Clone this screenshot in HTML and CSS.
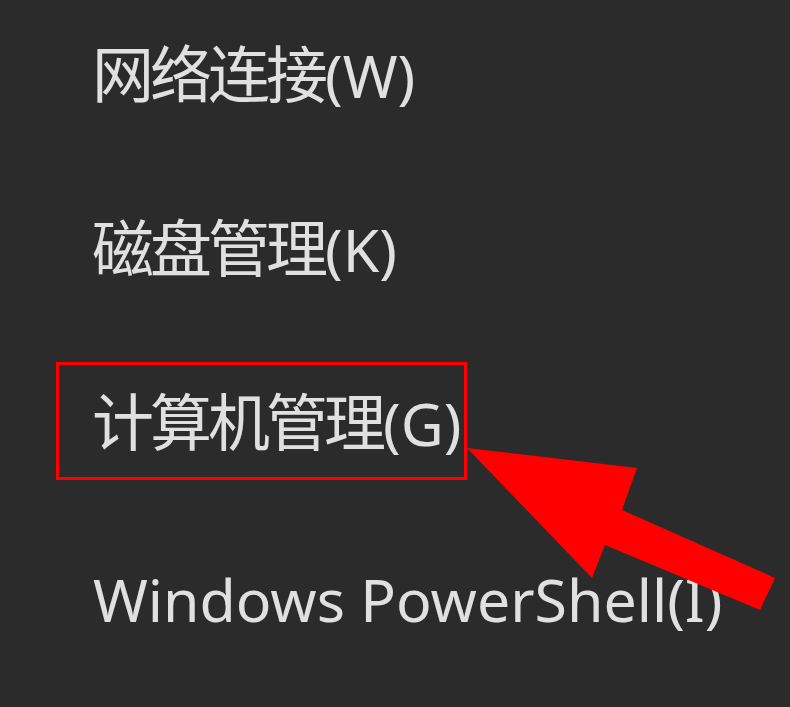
FILE: index.html
```html
<!DOCTYPE html>
<html lang="zh-CN">
<head>
<meta charset="utf-8">
<title>菜单</title>
<link rel="stylesheet" href="styles.css">
</head>
<body>
<div class="stage">
  <ul class="menu">
    <li class="item"><span class="han">网络连接</span><span class="lat">(W)</span></li>
    <li class="item"><span class="han">磁盘管理</span><span class="lat">(K)</span></li>
    <li class="item"><span class="han">计算机管理</span><span class="lat">(G)</span></li>
    <li class="item item-last"><span class="lat">Windows PowerShell(I)</span></li>
  </ul>
  <div class="highlight"></div>
  <svg class="arrow" width="790" height="707" viewBox="0 0 790 707">
    <polygon points="467,448 637,468 622,510 775,578 760,610 605,545 592,578" fill="#ff0000"/>
  </svg>
</div>
</body>
</html>
```
FILE: styles.css
```css
html, body {
  margin: 0;
  padding: 0;
  background: #2b2b2b;
}
.stage {
  position: relative;
  width: 790px;
  height: 707px;
  overflow: hidden;
  background: #2b2b2b;
}
.menu {
  list-style: none;
  margin: 0;
  padding: 37px 0 0 92px;
  display: flex;
  flex-direction: column;
  gap: 100px;
}
.item {
  font-family: "Noto Sans", "Noto Sans CJK SC", sans-serif;
  font-size: 60px;
  line-height: 74px;
  height: 74px;
  color: #e0e0e0;
  white-space: nowrap;
}
.item-last {
  margin-top: 3px;
}
.han {
  font-size: 62px;
  letter-spacing: -4px;
}
.lat {
  font-size: 59px;
  margin-left: 1px;
}
.highlight {
  position: absolute;
  left: 56px;
  top: 362px;
  width: 405px;
  height: 112px;
  border: 3px solid #ff0000;
}
.arrow {
  position: absolute;
  left: 0;
  top: 0;
}
```
